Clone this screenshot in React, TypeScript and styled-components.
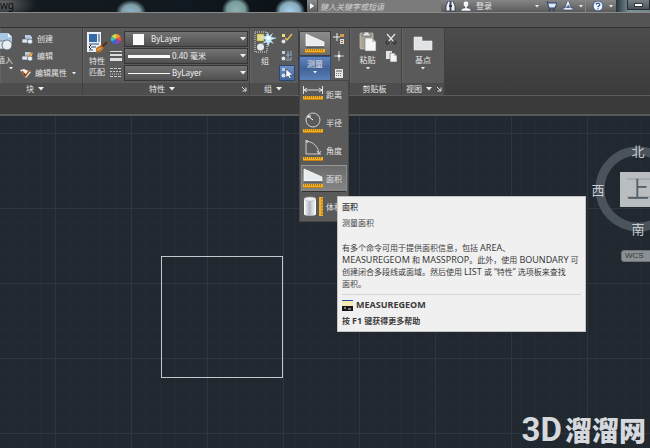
import React from "react";
import styled, { createGlobalStyle, css } from "styled-components";

const GlobalStyle = createGlobalStyle`
  * { box-sizing: border-box; }
  body {
    margin: 0;
    background: #212830;
    color: #e6e6e6;
    font: 8px/12px "Noto Sans", "Noto Sans CJK SC", sans-serif;
  }
  button, input, select { font: inherit; color: inherit; margin: 0; padding: 0; border: 0; background: none; border-radius: 0; }
  svg { display: block; flex: none; }
`;

const Window = styled.div`
  display: flex;
  flex-direction: column;
  min-height: 100vh;
  overflow: hidden;
`;

/* Title bar */
const TitleBar = styled.header`
  display: flex;
  height: 13px;
  border-bottom: 1px solid #8a8a8a;
  background: #10181f;
`;
const GlassArea = styled.div`
  flex: 0 0 307px;
  display: flex;
  overflow: hidden;
  background:
    radial-gradient(ellipse 15px 12px at 131px 12px, #8fb2cc 0%, #7fa0a8 60%, transparent 100%),
    radial-gradient(ellipse 14px 13px at 236px 10px, #8fb3b4 0%, #789c9a 65%, transparent 100%),
    radial-gradient(ellipse 15px 13px at 290px 11px, #a9cfec 0%, #86abbb 65%, transparent 100%),
    radial-gradient(ellipse 34px 14px at 2px 4px, #66696b, transparent 100%),
    linear-gradient(90deg, #151b20, #10191f 60%, #0b1217);
`;
const FileName = styled.span`
  color: #080a0c;
  font-size: 10px;
  line-height: 11px;
`;
const SearchToggle = styled.button`
  width: 10px;
  display: grid;
  place-items: center;
  background: linear-gradient(#8b8b8b, #5c5c5c);
`;
const SearchInput = styled.input`
  flex: 0 0 124px;
  min-width: 0;
  height: 12px;
  padding-left: 2px;
  background: #7b7b7b;
  border-left: 1px solid #4b4b4b;
  font-style: italic;
  line-height: 10px;
  &::placeholder { color: #d2d2d2; opacity: 1; }
`;
const InfoTools = styled.div`
  flex: 1;
  display: flex;
  align-items: center;
  padding-left: 2px;
  background: linear-gradient(#858585, #5b5b5b);
`;
const TitleButton = styled.button<{ $w: number }>`
  width: ${(p) => p.$w}px;
  height: 11px;
  display: flex;
  align-items: center;
  justify-content: center;
  gap: 5px;
  line-height: 10px;
`;
const LoginButton = styled(TitleButton)`
  justify-content: flex-start;
  gap: 4px;
  padding-left: 3px;
`;
const Divider = styled.span`
  width: 1px;
  height: 12px;
  background: #858585;
  margin: 0 3px;
`;
const WindowControls = styled.div`
  flex: 0 0 34px;
  display: flex;
  justify-content: flex-end;
  align-items: flex-start;
  background: linear-gradient(90deg, #27343c, #7e9299 40%, #76868d);
`;
const MinimizeButton = styled.button`
  width: 23px;
  height: 10px;
  display: grid;
  place-items: center;
  border: 1px solid #252d33;
  border-top: 0;
  background: linear-gradient(#788087, #4b5358);
`;

/* Ribbon */
const TabStrip = styled.nav`
  height: 15px;
  background: #545454;
  border-bottom: 1px solid #343434;
`;
const Ribbon = styled.section`
  display: flex;
  height: 68px;
  background: linear-gradient(#4c4c4c, #3b3b3b);
  border-bottom: 1px solid #5c5c5c;
`;
const Panel = styled.section<{ $w: number }>`
  flex: 0 0 ${(p) => p.$w}px;
  display: flex;
  flex-direction: column;
  background: #5a5a5a;
  border-right: 1px solid #414141;
  box-shadow: inset 1px 0 #656565;
`;
const PanelBody = styled.div<{ $pad?: number; $gap?: number }>`
  height: 55px;
  display: flex;
  align-items: flex-start;
  gap: ${(p) => p.$gap ?? 0}px;
  padding: 3px 0 0 ${(p) => p.$pad ?? 0}px;
`;
const PanelTitle = styled.footer<{ $end?: number }>`
  height: 12px;
  display: flex;
  align-items: center;
  background: #4d4d4d;
  padding-right: ${(p) => p.$end ?? 2}px;
`;
const PanelMenu = styled.button`
  flex: 1;
  display: flex;
  align-items: center;
  justify-content: center;
  gap: 4px;
  white-space: nowrap;
  line-height: 12px;
`;
const LargeButton = styled.button<{ $w: number; $clip?: boolean }>`
  width: ${(p) => p.$w}px;
  height: 50px;
  display: flex;
  flex-direction: column;
  align-items: ${(p) => (p.$clip ? "flex-end" : "center")};
  gap: 2px;
  overflow: hidden;
  white-space: nowrap;
  line-height: 11px;
`;
const Column = styled.div`
  display: flex;
  flex-direction: column;
  gap: 1px;
`;
const SmallButton = styled.button<{ $on?: boolean }>`
  min-width: 16px;
  height: 16px;
  display: flex;
  align-items: center;
  justify-content: center;
  ${(p) => p.$on && css`
    background: linear-gradient(#6f92c8, #41659d);
    outline: 1px solid #2b4773;
    outline-offset: -1px;
  `}
`;
const RowButton = styled.button`
  height: 16px;
  display: flex;
  align-items: center;
  gap: 3px;
  white-space: nowrap;
  svg:last-child { margin-left: 2px; }
`;
const PropertyRow = styled.label`
  display: flex;
  align-items: center;
  height: 16px;
`;
const SelectBox = styled.span`
  display: grid;
  width: 124px;
  height: 16px;
  margin-left: 2px;
  align-items: center;
  background: linear-gradient(#737373, #505050);
  border: 1px solid #353535;
  > * { grid-area: 1 / 1; }
  > svg { pointer-events: none; justify-self: end; margin-right: 1px; }
`;
const Select = styled.select<{ $indent: number }>`
  appearance: none;
  width: 100%;
  height: 14px;
  padding-left: ${(p) => p.$indent}px;
  color: #f1f1f1;
`;
const Swatch = styled.span<{ $line?: number }>`
  pointer-events: none;
  background: #fafafa;
  width: ${(p) => (p.$line ? 42 : 11)}px;
  height: ${(p) => p.$line ?? 11}px;
  margin-left: ${(p) => (p.$line ? 3 : 8)}px;
`;
const BelowRibbon = styled.div`
  height: 20px;
  background: #3a3a3a;
  border-bottom: 2px solid #595959;
`;

/* Measure split button and its menu */
const Measure = styled.div`
  position: relative;
  width: 32px;
  height: 50px;
`;
const MeasureIcon = styled.button`
  display: grid;
  place-items: center;
  width: 100%;
  height: 25px;
  background: linear-gradient(#8b8b8b, #6d6d6d);
  border: 1px solid #3f3f3f;
`;
const MeasureLabel = styled.button`
  display: flex;
  flex-direction: column;
  align-items: center;
  gap: 2px;
  width: 100%;
  height: 25px;
  padding-top: 1px;
  line-height: 11px;
  background: linear-gradient(#6286bd, #426398 50%, #5a80b8);
  border: 1px solid #314e7b;
`;
const Menu = styled.ul`
  position: absolute;
  z-index: 2;
  top: 49px;
  left: 0;
  width: 50px;
  margin: 0;
  padding: 0 1px;
  list-style: none;
  background: #5a5a5a;
  border: 1px solid #474747;
`;
const MenuButton = styled.button<{ $on?: boolean }>`
  display: flex;
  align-items: center;
  gap: 3px;
  width: 100%;
  height: 27px;
  padding-left: 1px;
  border: 1px solid transparent;
  white-space: nowrap;
  overflow: hidden;
  ${(p) => p.$on && css`
    background: linear-gradient(#6b6b6b, #858585);
    border-color: #999 #8a8a8a #333;
  `}
`;
const MenuItem = styled.li`
  height: 28px;
`;

/* Drawing area */
const Canvas = styled.main`
  position: relative;
  flex: 1;
  overflow: hidden;
  background-color: #212830;
  background-image:
    linear-gradient(90deg, #2d363e 1px, transparent 1px),
    linear-gradient(#2d363e 1px, transparent 1px),
    linear-gradient(90deg, #242c33 1px, transparent 1px),
    linear-gradient(#242c33 1px, transparent 1px);
  background-size: 76px 76px, 76px 75px, 15px 15px, 15px 15px;
  background-position: 55px 0, 0 17px, 10px 0, 0 2px;
`;
const DrawnSquare = styled.div`
  position: absolute;
  left: 161px;
  top: 140px;
  width: 122px;
  height: 122px;
  border: 1px solid #c4c8cc;
`;
const Tooltip = styled.aside`
  position: absolute;
  z-index: 3;
  left: 337px;
  top: 196px;
  width: 249px;
  height: 136px;
  background: #f0f0f0;
  border: 1px solid #c4c4c4;
  color: #3a3a3a;
  padding: 4px;
  p, h2 { margin: 0; font: inherit; white-space: nowrap; }
`;
const TipTitle = styled.h2`
  height: 16px;
  && { font-weight: 500; }
`;
const TipBody = styled.p`
  && { margin-top: 13px; }
`;
const Latin = styled.span`
  font-size: 9px;
`;
const TipFooter = styled.footer`
  display: flex;
  flex-direction: column;
  gap: 4px;
  margin-top: 4px;
  padding-top: 4px;
  border-top: 1px solid #d5d5d5;
  font-weight: 700;
`;
const TipCommand = styled.p`
  display: flex;
  align-items: center;
  gap: 3px;
`;
const Compass = styled.div`
  position: absolute;
  left: 588px;
  top: 22px;
  width: 100px;
`;
const Wcs = styled.button`
  position: absolute;
  left: 621px;
  top: 134px;
  width: 48px;
  height: 12px;
  padding-left: 3px;
  text-align: left;
  font: 8px/10px "Liberation Sans", sans-serif;
  color: #33383d;
  background: #8b9094;
  border: 1px solid #6d7277;
  border-radius: 3px;
`;
const Watermark = styled.div`
  position: absolute;
  right: 4px;
  bottom: 0;
  display: flex;
  align-items: center;
  height: 36px;
  gap: 3px;
  color: #d5d9dd;
  font: 900 27px/36px "Noto Sans CJK SC", sans-serif;
  white-space: nowrap;
`;
const WatermarkLatin = styled.span`
  font: 700 33px/36px Roboto, sans-serif;
`;

const Caret = ({ small }: { small?: boolean }) =>
  small ? (
    <svg width="4" height="3" viewBox="0 0 4 3"><path d="M0 0h4L2 2.5z" fill="#eee" /></svg>
  ) : (
    <svg width="6" height="4" viewBox="0 0 6 4"><path d="M0 0h6L3 3.6z" fill="#eee" /></svg>
  );

const Launcher = () => (
  <svg width="6" height="6" viewBox="0 0 6 6"><path d="M1 1l4 4M5 1.5V5H1.5" stroke="#ddd" fill="none" /></svg>
);

const Ruler = ({ y = 17, x = 0 }: { y?: number; x?: number }) => (
  <g>
    <rect x={x} y={y} width="20" height="4" fill="#f0b02c" />
    <path d={`M${x} ${y + 3.5}h20`} stroke="#c57e10" />
    <path d={`M${x + 1.5} ${y}v2m2-2v2m2-2v2m2-2v2m2-2v2m2-2v2m2-2v2m2-2v2m2-2v2`} stroke="#8d5a08" strokeWidth=".6" />
  </g>
);

const AreaIcon = () => (
  <svg width="20" height="21" viewBox="0 0 20 21">
    <path d="M1 1v12h18v-4z" fill="#e9ecef" stroke="#fff" strokeWidth=".7" />
    <path d="M1 14h18" stroke="#333" strokeWidth=".8" />
    <Ruler y={16} />
  </svg>
);

const icons = {
  distance: (
    <svg width="20" height="21" viewBox="0 0 20 21">
      <path d="M.5 2v8M19.5 2v8M1 6h18M4 4L1 6l3 2M16 4l3 2-3 2" stroke="#eee" fill="none" strokeWidth=".9" />
      <Ruler y={12} />
    </svg>
  ),
  radius: (
    <svg width="20" height="21" viewBox="0 0 20 21">
      <circle cx="10" cy="8" r="7" stroke="#ddd" fill="none" strokeWidth=".9" />
      <path d="M10 8L5 4M5 6V4h3" stroke="#fff" fill="none" />
      <Ruler />
    </svg>
  ),
  angle: (
    <svg width="20" height="21" viewBox="0 0 20 21">
      <path d="M3 0v14h15M3 1C11 2 15 7 16 13M14 11l2 3 2-3M5 0L3 1l2 2" stroke="#ddd" fill="none" strokeWidth=".9" />
      <Ruler />
    </svg>
  ),
  area: <AreaIcon />,
  volume: (
    <svg width="20" height="21" viewBox="0 0 20 21">
      <defs>
        <linearGradient id="cyl"><stop stopColor="#fff" /><stop offset=".45" stopColor="#aeb7bd" /><stop offset="1" stopColor="#fff" /></linearGradient>
      </defs>
      <path d="M1 3v15c0 2.500 12 2.500 12 0V3z" fill="url(#cyl)" />
      <ellipse cx="7" cy="3" rx="6" ry="2" fill="#eee" stroke="#b5b5b5" strokeWidth=".5" />
      <rect x="16" y="1" width="4" height="19" fill="#f0b02c" />
      <path d="M18 3h2m-2 3h2m-2 3h2m-2 3h2m-2 3h2m-2 3h2" stroke="#8d5a08" strokeWidth=".7" />
    </svg>
  ),
};

const InsertIcon = () => (
  <svg width="22" height="21" viewBox="0 0 22 21">
    <path d="M5 2h12l4 4v8H5z" fill="#a9c6e4" />
    <path d="M17 2v4h4z" fill="#eef4fb" />
    <rect x="3" y="10" width="11" height="8" fill="#dce6f0" stroke="#5e6b77" strokeWidth=".8" />
    <circle cx="16" cy="14" r="5" fill="#e8edf2" stroke="#55616d" strokeWidth=".9" />
  </svg>
);

const BlockIcon = ({ kind }: { kind: "create" | "edit" | "attr" }) => (
  <svg width="12" height="11" viewBox="0 0 12 11">
    {kind === "attr" ? (
      <>
        <path d="M0 2l4-1 7 3-5 6z" fill="#eceff1" />
        <path d="M2 3l3 5L10 2" stroke="#b65a22" strokeWidth="1.800" fill="none" />
        <path d="M4 5l2 3" stroke="#3b2a1e" />
      </>
    ) : (
      <>
        <path d="M3 1h5l2 2v4H3z" fill="#b5cbe6" />
        <rect x="0" y="5" width="6" height="4" fill="#dfe8f2" stroke="#536173" strokeWidth=".7" />
        <circle cx="8" cy="7.500" r="2.500" fill="#eef2f6" stroke="#536173" strokeWidth=".7" />
        {kind === "edit" && <path d="M5 5l5-4 1 2-4 3z" fill="#e59a32" />}
      </>
    )}
  </svg>
);

const MatchIcon = () => (
  <svg width="22" height="22" viewBox="0 0 22 22">
    <rect x="1" y="1" width="14" height="20" fill="#edf1f5" />
    <rect x="3" y="3" width="8" height="8" fill="#356aa8" />
    <path d="M13 3v8M3 13h10M5 16h5M3 19h4" stroke="#26486d" />
    <path d="M5 14l-2 2 2 2" stroke="#111" fill="none" />
    <path d="M21 11l-5 5" stroke="#5e2b13" strokeWidth="2" />
    <path d="M10 17l5-3 3 3-3 4-5 .5z" fill="#bd7428" />
    <path d="M11 19l4-2" stroke="#f0c074" />
  </svg>
);

const ColorWheel = () => (
  <svg width="12" height="12" viewBox="0 0 12 12">
    <path d="M6 6V1a5 5 0 0 1 4.500 3z" fill="#f39b2d" /><path d="M6 6l4.500-2.500a5 5 0 0 1 0 5z" fill="#e8513c" />
    <path d="M6 6l4.500 2.500A5 5 0 0 1 6 11z" fill="#8b45b5" /><path d="M6 6v5a5 5 0 0 1-4.500-2.500z" fill="#3268dc" />
    <path d="M6 6L1.500 8.500a5 5 0 0 1 0-5z" fill="#42bfc0" /><path d="M6 6L1.500 3.500A5 5 0 0 1 6 1z" fill="#cadb4b" />
  </svg>
);
const WeightIcon = () => (
  <svg width="12" height="12" viewBox="0 0 12 12"><path d="M0 1.500h12" stroke="#ddd" /><path d="M0 5h12" stroke="#ddd" strokeWidth="2" /><path d="M0 9.500h12" stroke="#ddd" strokeWidth="3" /></svg>
);
const LineTypeIcon = () => (
  <svg width="12" height="12" viewBox="0 0 12 12"><path d="M0 1.500h12M0 9.500h12" stroke="#ccc" strokeDasharray="3 1" /><path d="M0 4.500h12" stroke="#ccc" strokeDasharray="2 1" /><path d="M0 7h12" stroke="#ccc" strokeDasharray="1 1" /></svg>
);

const GroupIcon = () => (
  <svg width="23" height="22" viewBox="0 0 23 22">
    <rect x="1" y="1" width="12" height="20" fill="none" stroke="#e2e2e2" strokeDasharray="1 1" />
    <rect x="3" y="3" width="7" height="7" fill="#e6dc83" stroke="#a79a44" strokeWidth=".6" />
    <circle cx="6.500" cy="16" r="3.500" fill="#e7ebef" />
    <path d="M14 1l1 4 4-3-2 4 6 1-6 2 3 4-4-2-2 5-1-5-5 2 4-4-5-3 5-1z" fill="#c1eaff" />
    <circle cx="14.500" cy="7" r="2" fill="#fff" />
  </svg>
);
const GroupSmall = ({ kind }: { kind: number }) => (
  <svg width="12" height="12" viewBox="0 0 12 12">
    <rect x="1" y="1" width="3" height="3" fill={kind === 0 ? "#e9df7a" : "#bcd0e2"} />
    <circle cx="2.500" cy="8.500" r="2" fill="#dae2e8" />
    {kind === 0 && <path d="M4 5l2 2 5-6" stroke="#e0bd55" strokeWidth="1.500" fill="none" />}
    {kind === 1 && <path d="M7 1v8M5 5h6M10 1v3M10 7v3M5 10h5" stroke="#94b3cb" />}
    {kind === 2 && <path d="M5 2v9l2-2 2 3 1-1-1-3h3z" fill="#fff" stroke="#172b42" strokeWidth=".5" />}
  </svg>
);

const SelectPointIcon = () => (
  <svg width="12" height="12" viewBox="0 0 12 12">
    <path d="M4 0v8M0 4h7" stroke="#eee" /><path d="M7 1h4v3H7z" fill="#d59b48" />
    <rect x="7" y="6" width="4" height="5" fill="#dedede" /><path d="M8 7.500h2M8 9.500h2" stroke="#a46b2c" />
  </svg>
);
const PointIcon = () => (
  <svg width="12" height="12" viewBox="0 0 12 12"><path d="M6 1v10M1 6h10" stroke="#ccc" /><circle cx="6" cy="6" r="1.500" fill="#fff" /></svg>
);
const CalcIcon = () => (
  <svg width="10" height="11" viewBox="0 0 10 11">
    <rect x="1" y="1" width="8" height="9" fill="#e8e8e8" /><path d="M2 3h6" stroke="#555" />
    <path d="M2 5.500h6M2 7.500h6" stroke="#777" strokeDasharray="1 1" />
  </svg>
);
const PasteIcon = () => (
  <svg width="18" height="21" viewBox="0 0 18 21">
    <rect x="1" y="2" width="13" height="16" rx="1" fill="#aaa697" stroke="#c9c5b7" strokeWidth=".7" />
    <path d="M5 3V1h5v2h2v2H3V3z" fill="#e5e5e5" stroke="#444" strokeWidth=".6" />
    <path d="M6 7h7l4 4v9H6z" fill="#f4f5f6" stroke="#777" strokeWidth=".6" />
    <path d="M13 7v4h4z" fill="#bbc3ca" />
  </svg>
);
const CutIcon = () => (
  <svg width="12" height="12" viewBox="0 0 12 12">
    <path d="M2 1l7 8M10 1L3 9" stroke="#e5e5e5" strokeWidth="1.200" />
    <circle cx="2.500" cy="9.500" r="1.500" stroke="#222" fill="none" /><circle cx="9.500" cy="9.500" r="1.500" stroke="#222" fill="none" />
  </svg>
);
const CopyIcon = () => (
  <svg width="12" height="12" viewBox="0 0 12 12">
    <path d="M1 1h6v8H1z" fill="#e5e5e5" /><path d="M5 3h4l3 3v6H5z" fill="#f4f4f4" stroke="#555" strokeWidth=".6" /><path d="M9 3v3h3z" fill="#bbb" />
  </svg>
);
const BaseIcon = () => (
  <svg width="20" height="21" viewBox="0 0 20 21"><path d="M1 6h8v4h10v9H1z" fill="#e0e3e6" stroke="#f2f2f2" strokeWidth=".6" /></svg>
);

const Property = ({ icon, name, value, indent, line }: { icon: React.ReactNode; name: string; value: string; indent: number; line?: number }) => (
  <PropertyRow>
    {icon}
    <SelectBox>
      <Select $indent={indent} aria-label={name} defaultValue={value}>
        <option>{value}</option>
      </Select>
      <Swatch $line={line} />
      <Caret />
    </SelectBox>
  </PropertyRow>
);

const measures: { id: keyof typeof icons; label: string }[] = [
  { id: "distance", label: "距离" },
  { id: "radius", label: "半径" },
  { id: "angle", label: "角度" },
  { id: "area", label: "面积" },
  { id: "volume", label: "体积" },
];

export default function App() {
  return (
    <Window>
      <GlobalStyle />
      <TitleBar>
        <GlassArea><FileName>wg</FileName></GlassArea>
        <SearchToggle aria-label="展开">
          <svg width="4" height="6" viewBox="0 0 4 6"><path d="M0 0l4 3-4 3z" fill="#fff" /></svg>
        </SearchToggle>
        <SearchInput aria-label="搜索" placeholder="键入关键字或短语" />
        <InfoTools>
          <TitleButton $w={14} aria-label="查找">
            <svg width="11" height="11" viewBox="0 0 11 11">
              <path d="M1 10V5l2-5h2v10zM10 10V5L8 0H6v10z" fill="#eceff3" stroke="#27334f" strokeWidth=".8" /><path d="M4 4h3v2H4z" fill="#27334f" />
            </svg>
          </TitleButton>
          <LoginButton $w={78}>
            <svg width="12" height="11" viewBox="0 0 12 11">
              <path d="M6 0c4 0 3 5 1 6v1c3 0 4 1 4 3H1c0-2 1-3 4-3V6C3 5 2 0 6 0z" fill="#f4f5f7" stroke="#36415a" strokeWidth=".5" />
            </svg>
            登录
          </LoginButton>
          <TitleButton $w={4} aria-label="登录选项"><Caret small /></TitleButton>
          <TitleButton $w={23} aria-label="商店">
            <svg width="12" height="11" viewBox="0 0 12 11">
              <path d="M0 0h2l2 7h6l2-5H3" fill="#dfe9f5" stroke="#263b69" /><circle cx="4.500" cy="9" r="1" fill="#263b69" /><circle cx="9" cy="9" r="1" fill="#263b69" />
            </svg>
          </TitleButton>
          <TitleButton $w={20} aria-label="应用">
            <svg width="12" height="11" viewBox="0 0 12 11">
              <path d="M5 0L3 7H0l2 2h8l2-2H9L7 0z" fill="#e9edf4" stroke="#36466e" strokeWidth=".7" /><path d="M5 5l-1 2h4L7 4z" fill="#4d6497" />
            </svg>
            <Caret small />
          </TitleButton>
          <Divider />
          <TitleButton $w={27} aria-label="帮助">
            <svg width="12" height="11" viewBox="0 0 12 11">
              <circle cx="6" cy="5" r="5" fill="#f1f4f8" stroke="#355287" />
              <path d="M4 3.500C4.500 1.500 8 1.800 7.800 3.800C7.700 5 6 4.800 6 6.300M6 7.300v1.200" fill="none" stroke="#2d5598" strokeWidth="1.300" />
            </svg>
            <Caret small />
          </TitleButton>
        </InfoTools>
        <WindowControls>
          <MinimizeButton aria-label="最小化">
            <svg width="9" height="4" viewBox="0 0 9 4"><rect x=".5" y=".5" width="8" height="3" fill="#fff" stroke="#32383f" /></svg>
          </MinimizeButton>
        </WindowControls>
      </TitleBar>
      <TabStrip />
      <Ribbon>
        <Panel $w={83}>
          <PanelBody $gap={7}>
            <LargeButton $w={13} $clip><InsertIcon /><span>插入</span><Caret small /></LargeButton>
            <Column>
              <RowButton><BlockIcon kind="create" />创建</RowButton>
              <RowButton><BlockIcon kind="edit" />编辑</RowButton>
              <RowButton><BlockIcon kind="attr" />编辑属性<Caret small /></RowButton>
            </Column>
          </PanelBody>
          <PanelTitle $end={12}><PanelMenu>块<Caret /></PanelMenu></PanelTitle>
        </Panel>
        <Panel $w={167}>
          <PanelBody $pad={1}>
            <LargeButton $w={26}><MatchIcon /><span>特性<br />匹配</span></LargeButton>
            <Column>
              <Property icon={<ColorWheel />} name="颜色" value="ByLayer" indent={26} />
              <Property icon={<WeightIcon />} name="线宽" value="0.40 毫米" indent={47} line={3} />
              <Property icon={<LineTypeIcon />} name="线型" value="ByLayer" indent={47} line={1} />
            </Column>
          </PanelBody>
          <PanelTitle><PanelMenu>特性<Caret /></PanelMenu><Launcher /></PanelTitle>
        </Panel>
        <Panel $w={49}>
          <PanelBody $pad={3} $gap={2}>
            <LargeButton $w={24}><GroupIcon /><span>组</span></LargeButton>
            <Column>
              <SmallButton aria-label="解除编组"><GroupSmall kind={0} /></SmallButton>
              <SmallButton aria-label="组编辑"><GroupSmall kind={1} /></SmallButton>
              <SmallButton $on aria-label="组选择"><GroupSmall kind={2} /></SmallButton>
            </Column>
          </PanelBody>
          <PanelTitle><PanelMenu>组<Caret /></PanelMenu></PanelTitle>
        </Panel>
        <Panel $w={51}>
          <PanelBody>
            <Measure>
              <MeasureIcon aria-label="测量面积"><AreaIcon /></MeasureIcon>
              <MeasureLabel>测量<Caret small /></MeasureLabel>
              <Menu>
                {measures.map((m) => (
                  <MenuItem key={m.id}><MenuButton $on={m.id === "area"}>{icons[m.id]}{m.label}</MenuButton></MenuItem>
                ))}
              </Menu>
            </Measure>
            <Column>
              <SmallButton aria-label="快速选择"><SelectPointIcon /></SmallButton>
              <SmallButton aria-label="点坐标"><PointIcon /></SmallButton>
              <SmallButton aria-label="计算器"><CalcIcon /></SmallButton>
            </Column>
          </PanelBody>
          <PanelTitle />
        </Panel>
        <Panel $w={52}>
          <PanelBody $pad={5} $gap={3}>
            <LargeButton $w={25}><PasteIcon /><span>粘贴</span><Caret small /></LargeButton>
            <Column>
              <SmallButton aria-label="剪切"><CutIcon /></SmallButton>
              <SmallButton aria-label="复制"><CopyIcon /></SmallButton>
            </Column>
          </PanelBody>
          <PanelTitle><PanelMenu>剪贴板</PanelMenu></PanelTitle>
        </Panel>
        <Panel $w={43}>
          <PanelBody $pad={9}>
            <LargeButton $w={24}><BaseIcon /><span>基点</span><Caret small /></LargeButton>
          </PanelBody>
          <PanelTitle><PanelMenu>视图<Caret /></PanelMenu><Launcher /></PanelTitle>
        </Panel>
      </Ribbon>
      <BelowRibbon />
      <Canvas>
        <DrawnSquare />
        <Compass>
          <svg width="100" height="110" viewBox="0 -5 100 110">
            <circle cx="50" cy="46" r="38" fill="none" stroke="#4a525b" strokeWidth="9" />
            <rect x="32" y="29" width="36" height="35" fill="#b9bdc0" />
            <path d="M39 54h29M39 36h29" stroke="#9299a0" />
            <g fill="#c9cdd1" fontFamily="Noto Sans CJK SC, sans-serif" fontSize="13" textAnchor="middle">
              <text x="50" y="13">北</text><text x="10" y="52">西</text><text x="50" y="91">南</text>
              <text x="50" y="54" fontSize="22" fill="#555d65">上</text>
            </g>
          </svg>
        </Compass>
        <Wcs>WCS</Wcs>
        <Watermark><WatermarkLatin>3D</WatermarkLatin>溜溜网</Watermark>
      </Canvas>
      <Tooltip role="tooltip">
        <TipTitle>面积</TipTitle>
        <p>测量面积</p>
        <TipBody>
          有多个命令可用于提供面积信息，包括 <Latin>AREA</Latin>、<br />
          <Latin>MEASUREGEOM</Latin> 和 <Latin>MASSPROP</Latin>。此外，使用 <Latin>BOUNDARY</Latin> 可<br />
          创建闭合多段线或面域。然后使用 <Latin>LIST</Latin> 或 “特性” 选项板来查找<br />
          面积。
        </TipBody>
        <TipFooter>
          <TipCommand>
            <svg width="11" height="11" viewBox="0 0 11 11">
              <rect width="11" height="11" fill="#f3edb4" /><path d="M0 .5h11" stroke="#2a4aa0" /><rect y="6" width="11" height="5" fill="#181818" /><path d="M2 8h2m2 1h3" stroke="#ddd" />
            </svg>
            <Latin>MEASUREGEOM</Latin>
          </TipCommand>
          <p>按 <Latin>F1</Latin> 键获得更多帮助</p>
        </TipFooter>
      </Tooltip>
    </Window>
  );
}
